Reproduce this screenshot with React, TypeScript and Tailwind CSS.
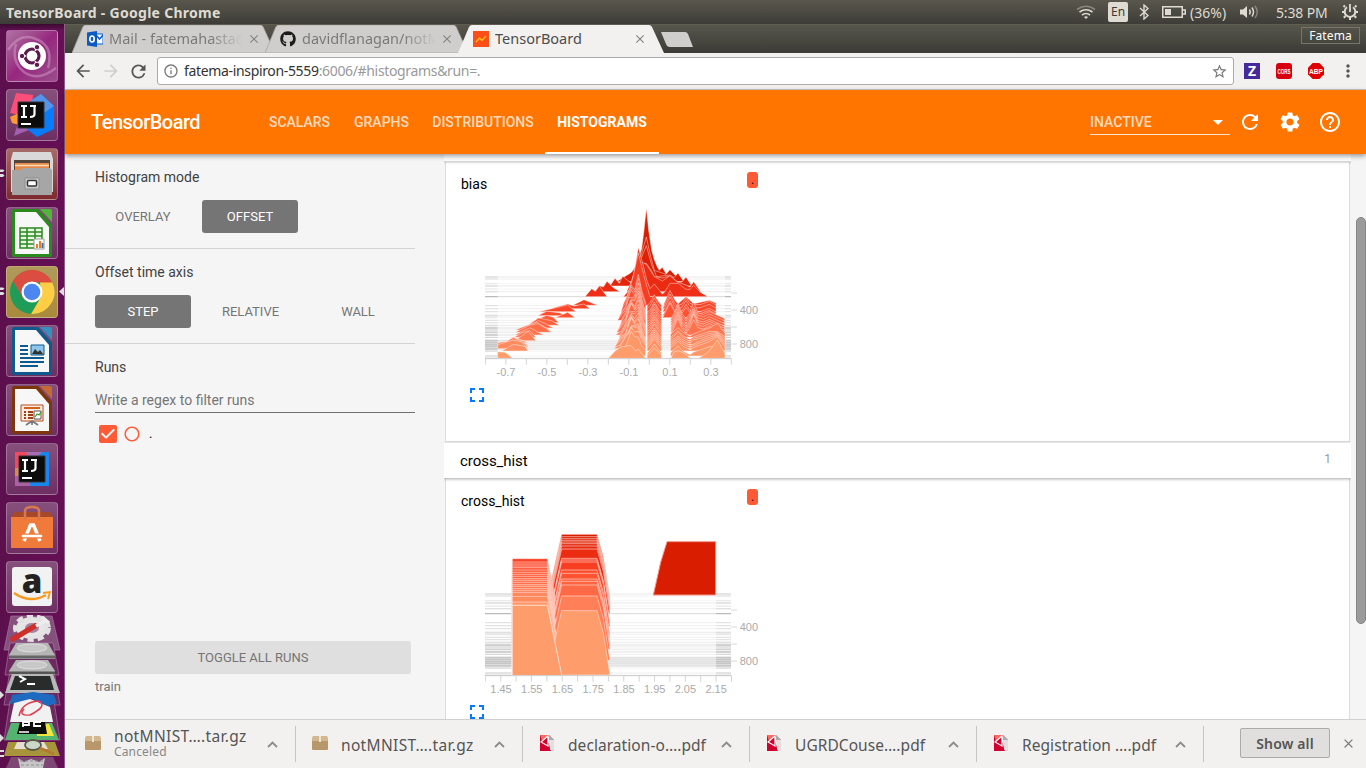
import React from "react";
import {
  MdArrowBack,
  MdArrowForward,
  MdRefresh,
  MdSettings,
  MdHelpOutline,
  MdFullscreen,
  MdStarBorder,
  MdMoreVert,
  MdInfoOutline,
  MdClose,
  MdArrowDropDown,
  MdCheckBox,
  MdRadioButtonUnchecked,
} from "react-icons/md";
import { FaGithub } from "react-icons/fa";

const UI = "font-['Noto_Sans',sans-serif]";

/* ---------- chart data ---------- */

type Pt = [number, number];
type Row = { base: number; pts: Pt[] };

const GRID: [number, number][] = [
  [352, 5], [358, 3], [372, 2], [379, 4], [388, 2], [396, 4], [411, 3], [438, 3], [447, 3],
  [456, 3], [468, 5], [474, 2], [482, 3], [489, 3], [497, 4], [505, 7], [511, 3], [518, 5],
  [526, 6], [533, 3], [543, 5], [549, 5], [555, 6], [561, 4], [567, 6], [574, 3], [589, 3], [596, 3],
];

const EARLY: Row[] = [
  { base: 352, pts: [[470, 0], [488, 18], [500, 40], [515, 85], [522, 140], [529, 207], [536, 140], [545, 80], [553, 52], [562, 30], [568, 20], [577, 29], [594, 0]] },
  { base: 360, pts: [[465, 0], [488, 20], [505, 45], [515, 80], [529, 128], [542, 70], [553, 28], [577, 20], [588, 16], [600, 30], [618, 10], [630, 0]] },
  { base: 366, pts: [[440, 0], [458, 12], [482, 26], [505, 50], [529, 108], [545, 50], [560, 15], [600, 20], [612, 12], [624, 26], [642, 0]] },
  { base: 379, pts: [[420, 0], [435, 23], [448, 8], [458, 29], [482, 10], [495, 30], [505, 50], [517, 66], [529, 68], [545, 45], [553, 28], [577, 24], [600, 30], [624, 12], [636, 12], [648, 27], [665, 0]] },
  { base: 396, pts: [[376, 0], [388, 18], [400, 14], [411, 31], [430, 12], [450, 0], [470, 0], [482, 25], [494, 60], [505, 95], [529, 82], [553, 45], [577, 32], [600, 48], [620, 30], [648, 20], [660, 14], [671, 30], [692, 0]] },
  { base: 411, pts: [[345, 0], [365, 24], [376, 16], [388, 32], [411, 0], [460, 0], [482, 25], [494, 80], [505, 148], [520, 92], [530, 50], [540, 24], [553, 38], [577, 8], [584, 14], [600, 40], [624, 40], [648, 22], [660, 22], [671, 34], [690, 14], [714, 0]] },
  { base: 437, pts: [[308, 0], [342, 17], [383, 0], [460, 0], [475, 35], [490, 90], [505, 157], [524, 80], [540, 26], [553, 28], [575, 0], [580, 0], [600, 45], [615, 15], [624, 5], [648, 26], [671, 5], [718, 15], [738, 7], [738, 0]] },
];

const WING: Record<number, Pt[]> = {
  447: [[240, 0], [293, 14], [312, 8], [342, 14], [360, 0]],
  456: [[205, 0], [268, 14], [293, 20], [318, 0]],
  468: [[203, 0], [230, 13], [268, 9], [290, 0]],
  474: [[255, 0], [293, 16], [315, 0]],
  489: [[180, 0], [230, 22], [250, 16], [266, 0]],
  497: [[175, 0], [205, 22], [245, 14], [268, 0]],
  505: [[165, 0], [205, 22], [225, 14], [250, 0]],
  511: [[135, 0], [180, 17], [200, 23], [240, 0]],
  518: [[135, 0], [160, 12], [180, 22], [205, 26], [245, 0]],
  526: [[133, 0], [180, 22], [205, 8], [222, 0]],
  533: [[132, 0], [156, 14], [180, 20], [198, 0]],
  543: [[130, 0], [155, 14], [175, 28], [198, 0]],
  549: [[108, 0], [130, 17], [160, 6], [175, 0]],
  555: [[84, 0], [108, 8], [130, 22], [155, 12], [172, 0]],
  561: [[83, 0], [83, 12], [110, 16], [130, 28], [160, 12], [176, 0]],
  567: [[83, 0], [83, 12], [130, 26], [155, 20], [172, 0]],
  574: [[95, 0], [130, 20], [165, 14], [174, 0]],
  589: [[83, 0], [83, 12], [110, 8], [122, 0]],
  596: [[83, 0], [83, 20], [105, 18], [128, 0]],
};

function lateRow(base: number, i: number): Row {
  const t = (base - 447) / 149;
  const w = (n: number) => ((i * 37 + n * 53) % 17) / 17;
  const wing = WING[base] ?? [];
  const last = base === 596;
  const center: Pt[] = last
    ? [[415, 0], [435, 22], [452, 34], [482, 39], [497, 22], [505, 27], [527, 0]]
    : [
        [458 - 18 * t - 14 * w(1), 0], [460 - 12 * t, 12 + 8 * w(2)], [467, 28 + 20 * w(7) * t], [476, 46 + 16 * w(3)],
        [484, 60 + 22 * w(4)], [494, 56 + 10 * w(9)], [505, 98 - 50 * t + 8 * w(5)], [516, 52 - 24 * t], [527, 8 + 12 * w(6)], [527, 0],
      ];
  const mid: Pt[] = [[531, 0], [532, 10], [541, 19], [553, last ? 30 : 42 - 6 * t], [566, 19], [574, 10], [575, 0]];
  let right: Pt[];
  if (last) {
    right = [[602, 0], [612, 19], [624, 23], [640, 17], [662, 0], [685, 0], [705, 12], [718, 22], [742, 56], [765, 14], [765, 0]];
  } else if (base < 480) {
    right = [[578, 0], [600, 44], [613, 18], [622, 8], [636, 14], [648, 30 + 5 * w(4)], [660, 16], [671, 12], [690, 12], [718, 22], [738, 11], [738, 0]];
  } else if (base < 530) {
    right = [[601, 0], [612, 22], [624, 50], [636, 20], [648, 5], [658, 20], [671, 46 + 10 * w(2)], [684, 22], [700, 18], [718, 26], [740, 16], [763, 6], [765, 0]];
  } else {
    right = [[601, 0], [602, 10], [624, 26 + 6 * w(5)], [640, 14], [660, 4], [671, 8 + 8 * w(3)], [695, 20], [718, 28], [742, 26 + 18 * w(8)], [765, 12], [765, 0]];
  }
  return { base, pts: [...wing, ...center, ...mid, ...right] };
}

const BIAS: Row[] = [...EARLY, ...GRID.map((g) => g[0]).filter((b) => b >= 447).map(lateRow)];

function shade(t: number): string {
  const stops = [[217, 29, 0], [240, 48, 24], [255, 80, 48], [255, 120, 82], [255, 156, 107]];
  const p = Math.max(0, Math.min(0.9999, t)) * 4;
  const k = Math.floor(p);
  const f = p - k;
  const c = stops[k].map((v, n) => Math.round(v + (stops[k + 1][n] - v) * f));
  return "rgb(" + c.join(",") + ")";
}

function Axis({ ticks, labels }: { ticks: number[]; labels: [number, string][] }) {
  return (
    <g>
      <path d="M46 597H784" stroke="#cfcfcf" strokeWidth="3" />
      {ticks.map((x) => (
        <path key={x} d={`M${x} 597V615`} stroke="#d4d4d4" strokeWidth="3" />
      ))}
      {[400, 451, 502, 553].map((y) => (
        <path key={y} d={`M784 ${y}H801`} stroke="#d8d8d8" strokeWidth="3" />
      ))}
      <g fill="#aaaaaa" fontSize="33" fontFamily="Liberation Sans, Arial, sans-serif">
        {labels.map(([x, s]) => (
          <text key={s} x={x} y="648" textAnchor="middle">{s}</text>
        ))}
        <text x="809" y="463">400</text>
        <text x="809" y="564">800</text>
      </g>
    </g>
  );
}

function Grid({ from, to }: { from: number; to: number }) {
  return (
    <g>
      {GRID.map(([y, w]) => (
        <g key={y} strokeWidth={w}>
          <path d={`M45 ${y}H783`} stroke={y === 411 || y === 596 ? "#d8d8d8" : "#f0f0f0"} />
          <path d={`M45 ${y}H${from}M${to} ${y}H783`} stroke={y === 411 || y === 596 ? "#b4b4b4" : y > 500 ? "#d2d2d2" : "#e0e0e0"} />
        </g>
      ))}
      <path d="M45 555H783" stroke="#000" strokeOpacity="0.05" strokeWidth="30" />
    </g>
  );
}

function BiasChart() {
  const ticks = Array.from({ length: 13 }, (_, i) => 46 + i * 61.5);
  return (
    <svg className="block h-[190px] w-[290px]" viewBox="45 100 870 570">
      <Grid from={83} to={765} />
      {BIAS.map(({ base, pts }, i) => (
        <path
          key={i}
          d={"M" + pts.map(([x, h]) => `${x.toFixed(1)} ${(base - h).toFixed(1)}`).join("L") + "Z"}
          fill={shade((base - 352) / 244)}
          stroke="#ffffff"
          strokeOpacity="0.5"
          strokeWidth="2.6"
        />
      ))}
      <Axis ticks={ticks} labels={[[108, "-0.7"], [231, "-0.5"], [354, "-0.3"], [477, "-0.1"], [600, "0.1"], [723, "0.3"]]} />
    </svg>
  );
}

const RIGHT_TOPS = [173, 180, 186, 191, 196, 201, 208, 217, 245, 250, 256, 280, 290, 307, 314, 325, 358, 402];
const LEFT_TOPS = [246, 256, 262, 268, 273, 280, 287, 293, 299, 306, 311, 317, 324, 329, 336, 342, 348, 359, 376, 386];

function CrossChart() {
  const ticks = Array.from({ length: 17 }, (_, i) => 46 + i * 46.15);
  const rows = [
    ...RIGHT_TOPS.map((y) => ({ side: "r", y, base: y + 193 })),
    ...LEFT_TOPS.map((y) => ({ side: "l", y, base: y + 209 })),
  ].sort((a, b) => a.base - b.base);
  const labels: [number, string][] = ["1.45", "1.55", "1.65", "1.75", "1.85", "1.95", "2.05", "2.15"].map((s, i) => [93 + i * 92.2, s]);
  return (
    <svg className="block h-[190px] w-[290px]" viewBox="45 100 870 570">
      <Grid from={123} to={738} />
      <path d="M550 355L572 257L591 195H737V355Z" fill="#d91d00" stroke="#f0968a" strokeWidth="3" />
      {rows.map(({ side, y, base }) => {
        const f = Math.max(0, (base - 366) / 229);
        const d =
          side === "l"
            ? `M127 ${base}V${y}H232L254 ${y + 108}L275 ${base}Z`
            : `M232 ${base}L254 ${y + 92}L275 ${y}H381L400 ${y + 67}L420 ${base}Z`;
        return <path key={side + y} d={d} fill={shade(f)} stroke="#ffe4dc" strokeOpacity="0.6" strokeWidth="3" />;
      })}
      <path d="M127 595V386H232L254 494L275 595Z" fill="#ff9c6b" />
      <path d="M127 595V386H232L275 595" fill="none" stroke="#ffd9c6" strokeWidth="3" />
      <Axis ticks={ticks} labels={labels} />
    </svg>
  );
}

/* ---------- launcher ---------- */

function Tile({ tone, children, run }: { tone: string; children: React.ReactNode; run?: boolean }) {
  return (
    <div className="relative h-[52px] w-[52px] shrink-0">
      <div className={"h-full w-full rounded-[4px] border border-white/25 " + tone}>
        <svg className="block h-[50px] w-[50px]" viewBox="1 1 50 50">{children}</svg>
      </div>
      {run && (
        <svg className="absolute top-[20px] -left-[6px] h-[10px] w-[5px]" viewBox="0 0 5 10">
          <path d="M0 1.5H3L4.500 2.500L3 4H0ZM0 6H3L4.500 7.500L3 9H0Z" fill="#dedede" />
        </svg>
      )}
    </div>
  );
}

function Intellij() {
  return (
    <g>
      <path d="M13 13H39V39H13Z" fill="#0c0c0c" stroke="#333" />
      <path d="M16 17H22M19 17V28M16 28H22M25 17H31M29.500 17V25Q29.500 28 25 28" stroke="#fff" strokeWidth="2.200" fill="none" />
      <path d="M16 35H26" stroke="#fff" strokeWidth="2" />
    </g>
  );
}

function OfficeDoc({ color, light, children }: { color: string; light: string; children: React.ReactNode }) {
  return (
    <g>
      <path d="M8 2H32L46 18V48Q46 50 44 50H8Q6 50 6 48V4Q6 2 8 2Z" fill={color} />
      <path d="M34 2H44Q46 2 46 4V15Z" fill={light} />
      <path d="M9 5H30L43 20V47H9Z" fill="#f7f7f7" />
      {children}
    </g>
  );
}

function Launcher() {
  const violet = "bg-linear-to-b from-[#87507c] to-[#6e2f63]";
  return (
    <aside className="flex h-full w-[65px] shrink-0 flex-col border-r border-[#8a5f82] bg-linear-to-r from-[#5c0f4d] to-[#660f56]">
      <div className="h-[6px] shrink-0 bg-linear-to-b from-[#3a0a31] to-transparent" />
      <div className="flex flex-col gap-[7px] pl-[6px]">
        <Tile tone="bg-linear-to-br from-[#ad71a1] via-[#97267f] to-[#9a4d8c]">
          <path d="M2 20Q14 2 30 9Q48 16 42 38M50 38Q32 52 18 42Q5 32 10 14" stroke="#d8a9ce" strokeOpacity=".45" fill="none" strokeWidth="2.500" />
          <circle cx="26" cy="26" r="14" fill="#fff" />
          <circle cx="26" cy="26" r="7" fill="none" stroke="#5c1a50" strokeWidth="3.200" />
          <path d="M20 26H13M29 31L33 38M29 21L33 14" stroke="#fff" strokeWidth="1.500" />
          <g fill="#5c1a50" stroke="#fff" strokeWidth="1">
            <circle cx="16" cy="26" r="2.700" /><circle cx="31" cy="17.200" r="2.700" /><circle cx="31" cy="34.800" r="2.700" />
          </g>
        </Tile>
        <Tile tone={violet}>
          <path d="M10 4L27 6L24 28L4 24Z" fill="#fb4f7a" />
          <path d="M4 28L13 24V36L6 34Z" fill="#fb9d2e" />
          <path d="M13 30L8 47L30 38Z" fill="#a35fb0" />
          <path d="M35 5L48 17V40L31 48L21 40V15Z" fill="#087cfa" />
          <path d="M35 5L48 17L38 24L24 12Z" fill="#5494ea" />
          <g transform="translate(-1 0)"><Intellij /></g>
        </Tile>
        <Tile tone="bg-linear-to-b from-[#a66b68] to-[#7d2a31]" run>
          <path d="M7 4H45L47 11V44H5V11Z" fill="#d9d9d9" />
          <path d="M8 12H44V23H8Z" fill="#54453d" />
          <path d="M9 15H43V23H9Z" fill="#e58a4a" />
          <path d="M9 17.500H43" stroke="#fbd9b4" strokeWidth="1.500" />
          <path d="M6 22H15L17 20H44L46 22V47H6Z" fill="#a6a6a6" />
          <path d="M19 30H33V41H19Z" fill="#c9c9c9" stroke="#8f8f8f" />
          <rect x="21.500" y="32.500" width="9" height="5.500" rx="1" fill="#fff" stroke="#333" strokeWidth="1.500" />
        </Tile>
        <Tile tone={violet}>
          <OfficeDoc color="#2b8a1e" light="#52b53c">
            <path d="M14 21H36V41H14Z" fill="#e9f5e6" />
            <path d="M14 21H36V41H14ZM14 25H36M14 29H36M14 33H36M14 37H36M21 21V41M29 21V41" stroke="#2b8a1e" strokeWidth="1.500" fill="none" />
            <path d="M28 32H38V42H28Z" fill="#fff" stroke="#999" />
            <path d="M30 41V37H32V41ZM33 41V34H35V41Z" fill="#f07a17" /><path d="M35.500 41V36H37.500V41Z" fill="#2b77bb" />
          </OfficeDoc>
        </Tile>
        <div className="relative">
          <Tile tone="bg-linear-to-b from-[#b09a5a] to-[#a98a3c]" run>
            <circle cx="26" cy="26" r="22" fill="#1f9d58" />
            <path d="M7 15A22 22 0 0 1 46 16H26L17 32Z" fill="#dc4d41" />
            <path d="M46 16A22 22 0 0 1 25 48L35 31L34 16Z" fill="#ffce44" />
            <path d="M26 16H46" stroke="#dc4d41" />
            <circle cx="26" cy="26" r="10.500" fill="#fff" /><circle cx="26" cy="26" r="8.300" fill="#4c86f0" />
          </Tile>
          <svg className="absolute top-[21px] left-[53px] h-[9px] w-[5px]" viewBox="0 0 5 9"><path d="M5 0V9L0 4.500Z" fill="#dedede" /></svg>
        </div>
        <Tile tone={violet}>
          <OfficeDoc color="#0e5a8c" light="#3590c0">
            <path d="M14 21H22M14 25H22M14 29H22M14 33H38M14 37H38M14 41H32" stroke="#0e5a8c" strokeWidth="2" />
            <path d="M25 20H38V30H25Z" fill="#8cc6ea" stroke="#0e5a8c" /><path d="M26 29L29 24L32 27L34 25L37.500 29.500Z" fill="#333" />
          </OfficeDoc>
        </Tile>
        <Tile tone={violet}>
          <OfficeDoc color="#7d360c" light="#c36b34">
            <path d="M15 21H37V37H15Z" fill="#fdeee4" stroke="#b7491a" />
            <path d="M18 24H34" stroke="#d7601f" strokeWidth="2" />
            <path d="M18 28H20M18 31H20M18 34H20M22 28H27M22 31H27M22 34H27" stroke="#a63c12" strokeWidth="1.800" />
            <path d="M28 27H35V35H28Z" fill="#fff" stroke="#555" /><path d="M29 33L31 30L33 31L35 28" stroke="#3c9b30" fill="none" strokeWidth="1.300" />
            <path d="M26 37L20 41M26 37L32 41M26 37V41" stroke="#777" strokeWidth="1.600" />
          </OfficeDoc>
        </Tile>
        <Tile tone={violet}>
          <path d="M9 9H26V43H9Z" fill="#f0485c" /><path d="M9 25H16V43H9Z" fill="#d58b52" /><path d="M9 33H26V43H9Z" fill="#a862a2" />
          <path d="M26 9H43V43H24Z" fill="#1786ee" /><path d="M20 9H36L26 20Z" fill="#a66fb2" />
          <Intellij />
        </Tile>
        <Tile tone={violet}>
          <path d="M5 15H47V46H5Z" fill="#f07a3a" /><path d="M5 15L8 10H44L47 15Z" fill="#a6492a" />
          <path d="M19 18V9Q19 5 26 5Q33 5 33 9V18" fill="none" stroke="#d87850" strokeWidth="2.500" />
          <path d="M18 39L24.500 23H27.500L34 39" fill="none" stroke="#fff" strokeWidth="3.500" />
          <path d="M17 34H35" stroke="#f07a3a" strokeWidth="5" /><path d="M17 34H35" stroke="#fff" strokeWidth="2.600" strokeLinecap="round" />
        </Tile>
        <Tile tone={violet}>
          <rect x="6" y="6" width="40" height="39" rx="3" fill="#f2f2f2" />
          <text x="26" y="32" textAnchor="middle" fontFamily="Open Sans, sans-serif" fontWeight="800" fontSize="33" fill="#222">a</text>
          <path d="M8 32Q24 43 40 34" stroke="#f79b1e" strokeWidth="2.500" fill="none" /><path d="M37 32L44 31L42 38" stroke="#f79b1e" strokeWidth="1.800" fill="none" />
        </Tile>
      </div>
      <svg className="mt-[2px] block h-[153px] w-[64px] shrink-0" viewBox="0 0 64 153">
        <g stroke="#b27eaa" strokeOpacity=".6">
          <path d="M11 1H52L60 35H4Z" fill="#85507c" />
          <path d="M10 28H53L59 60H5Z" fill="#6c2a61" />
          <path d="M10 56H54L60 90H4Z" fill="#6c2a61" />
          <path d="M10 86H54L60 125H4Z" fill="#6c2a61" />
        </g>
        <ellipse cx="32" cy="13" rx="16" ry="11" fill="#e5e5e5" stroke="#e2e2e2" strokeWidth="6" strokeDasharray="6 3.800" />
        <ellipse cx="32" cy="13" rx="7" ry="5" fill="#a683a1" />
        <path d="M13 24L35 11" stroke="#cf2f2a" strokeWidth="5.500" strokeLinecap="round" />
        <path d="M36 11L45 6M42 2L49 8" stroke="#ededed" strokeWidth="3.500" />
        <path d="M16 28H48L55 40V44H9V40Z" fill="#b5b5b5" /><ellipse cx="32" cy="33" rx="15" ry="4" fill="#c8c8c8" stroke="#e0e0e0" /><path d="M9 42H55" stroke="#666" strokeWidth="3" />
        <path d="M16 45H48L55 56V60H9V56Z" fill="#b5b5b5" /><ellipse cx="32" cy="50" rx="15" ry="4" fill="#c8c8c8" stroke="#e0e0e0" /><path d="M9 58H55" stroke="#555" strokeWidth="3" />
        <path d="M12 59H53L60 78H5Z" fill="#b8b8b8" /><path d="M15 61H50L54 75H10Z" fill="#282c2b" />
        <path d="M19 61L25 64L20 67M27 69H35" stroke="#fff" strokeWidth="2" fill="none" />
        <path d="M12 80L33 77L54 80L57 88L48 91L32 84L10 89Z" fill="#1d6bc0" />
        <path d="M14 88L30 84L50 92L53 107H10Z" fill="#f1f1f1" />
        <path d="M19 101Q22 87 39 86Q48 91 30 100Q18 101 24 94" stroke="#dc3e50" strokeWidth="1.500" fill="none" />
        <path d="M11 108H52L59 125H5Z" fill="#53b36f" /><path d="M37 109H49L54 121H37Z" fill="#f1e63c" />
        <path d="M20 107H45L47 119H17Z" fill="#0d0d0d" />
        <path d="M23 112V107H29V110H23M41 107H34V111H41" stroke="#fff" strokeWidth="1.800" fill="none" />
        <path d="M19 117H29" stroke="#fff" strokeWidth="1.500" />
        <path d="M8 127H55L60 141H4Z" fill="#a8943a" />
        <path d="M17 127H44L48 134H14Z" fill="#e5e1d2" /><ellipse cx="33" cy="130" rx="8" ry="5" fill="#cbd7c7" stroke="#595b46" strokeWidth="1.800" /><path d="M40 133L54 139" stroke="#b47830" strokeWidth="2.500" />
        <path d="M11 142H53L58 153H6Z" fill="#7c4772" />
        <path d="M18 143L24 147L31 144L39 147L45 143L43 153H20Z" fill="#c6c6c6" /><path d="M20 146H44M21 150H43" stroke="#8e8e8e" strokeDasharray="3 2" />
        <path d="M0 76L4 80L0 84ZM0 119L4 123L0 127Z" fill="#dedede" /><path d="M0 136H4M0 141H4" stroke="#dedede" strokeWidth="2" />
      </svg>
    </aside>
  );
}

/* ---------- desktop panel and browser chrome ---------- */

function SystemBar() {
  return (
    <header className="flex h-6 shrink-0 items-center bg-linear-to-b from-[#5a584d] to-[#3d3c37] pr-[8px] pl-[6px] text-[#dfdbd2]">
      <span className="text-[14px] font-bold tracking-[0.280px]">TensorBoard - Google Chrome</span>
      <div className="ml-auto flex h-full items-center text-[14px]">
        <svg className="mr-[12px] h-[16px] w-[20px]" viewBox="0 0 20 16" fill="none" stroke="#dfdbd2" strokeWidth="1.600">
          <path d="M1 5.500Q10 -1 19 5.500" strokeOpacity=".4" /><path d="M3.500 8Q10 3.500 16.500 8M6 11Q10 8 14 11" /><path d="M8 13L10 15L12 13Q10 11.500 8 13Z" fill="#dfdbd2" stroke="none" />
        </svg>
        <span className="mr-[11px] flex h-5 w-5 items-center justify-center rounded-[2px] bg-[#dfdbd2] text-[12px] text-[#3c3b37]">En</span>
        <svg className="mr-[13px] h-4 w-[10px]" viewBox="0 0 10 16"><path d="M1 4L9 11.500L5 15V1L9 4.500L1 12" stroke="#dfdbd2" strokeWidth="1.400" fill="none" /></svg>
        <svg className="mr-[4px] h-3 w-6" viewBox="0 0 24 12"><path d="M.75 .75H20.250V11.250H.75ZM21 4H23.250V8H21" fill="none" stroke="#dfdbd2" strokeWidth="1.500" /><path d="M3 3H9V9H3Z" fill="#dfdbd2" /></svg>
        <span className="mr-[12px] w-[38px] tracking-[0.050px]">(36%)</span>
        <svg className="mr-[17px] h-[14px] w-[19px]" viewBox="0 0 19 14"><path d="M0 4.500H3L7 1V13L3 9.500H0Z" fill="#dfdbd2" /><path d="M9.500 4.500Q11 7 9.500 9.500M12 2.500Q15 7 12 11.500" stroke="#dfdbd2" strokeWidth="1.500" fill="none" /><path d="M15 1Q19.500 7 15 13" stroke="#dfdbd2" strokeOpacity=".4" strokeWidth="1.500" fill="none" /></svg>
        <span className="mr-[13px] w-[53px] whitespace-nowrap tracking-[-0.150px]">5:38 PM</span>
        <svg className="h-4 w-4" viewBox="0 0 16 16" fill="none" stroke="#dfdbd2"><path d="M5 3.300A5.300 5.300 0 1 0 11 3.300" strokeWidth="2" /><path d="M8 0V8" strokeWidth="1.800" /><path d="M3 3L1.500 1.500M2.500 8H0M3.500 12L1.800 13.800M8 13V16M12.500 12L14.200 13.800M13.500 8H16M13 3L14.500 1.500" strokeWidth="2" /></svg>
      </div>
    </header>
  );
}

function Tab({ title, icon, active, width }: { title: string; icon: React.ReactNode; active?: boolean; width: string }) {
  return (
    <div className={"relative -mr-[10px] flex h-[28px] items-center pl-[15px] " + width + (active ? " z-10" : "")}>
      <svg className="absolute inset-0 h-full w-full" viewBox="0 0 206 28" preserveAspectRatio="none">
        <path d="M0 28L11 2Q12 0 14 0H191Q193 0 194 2L206 28Z" fill={active ? "#f2f1f0" : "#cfcecd"} stroke={active ? "none" : "#a9a8a6"} strokeWidth=".8" />
      </svg>
      <div className="relative -mt-[1px] flex h-4 w-4 shrink-0 items-center justify-center">{icon}</div>
      <span className={"relative -mt-[2px] ml-[6px] w-[134px] overflow-hidden text-[14.500px] leading-5 whitespace-nowrap " + (active ? "text-[#4c4c4c]" : "bg-linear-to-r from-[#777] from-75% to-transparent bg-clip-text text-transparent")}>
        {title}
      </span>
      <MdClose className="relative -mt-[1px] ml-[4px] h-[14px] w-[14px] shrink-0 text-[#858585]" />
    </div>
  );
}

function BrowserChrome() {
  return (
    <div className="shrink-0">
      <div className="flex h-[29px] items-end border-t border-[#5f5d50] bg-linear-to-b from-[#57564b] to-[#3c3b37] pl-[7px]">
        <Tab width="w-[203px]" title="Mail - fatemahasta@" icon={
          <svg className="h-4 w-4" viewBox="0 0 16 16"><path d="M9 3H16V13H9Z" fill="#fff" stroke="#0a5bc4" /><path d="M9 4L12.500 8L16 4" stroke="#0a5bc4" strokeWidth="1.500" fill="none" /><path d="M0 1.500L10 0V16L0 14.500Z" fill="#0a5bc4" /><ellipse cx="5" cy="8" rx="2.200" ry="3" fill="none" stroke="#fff" strokeWidth="1.700" /></svg>} />
        <Tab width="w-[203px]" title="davidflanagan/notMN" icon={<FaGithub className="h-4 w-4 text-[#1b1b1b]" />} />
        <Tab active width="w-[206px]" title="TensorBoard" icon={
          <svg className="h-4 w-4" viewBox="0 0 16 16"><path d="M0 0H16V16H0Z" fill="#fc4f18" /><path d="M3 11L6.500 7L9 9.500L13 5" stroke="#ffbe18" strokeWidth="1.500" fill="none" /></svg>} />
        <svg className="mb-[5px] ml-[6px] h-[16px] w-[34px]" viewBox="0 0 34 16"><path d="M1 0H25Q27 0 28 2L33 15H10Q7 15 6 12Z" fill="#cfcecd" /></svg>
        <div className="mr-[6px] mb-[9px] ml-auto flex h-[17px] w-[59px] items-center justify-center border border-[#777469] text-[12px] tracking-[0.100px] text-white">Fatema</div>
      </div>
      <div className="flex h-[37px] items-center border-b border-[#c9c8c6] bg-[#f2f1f0] pl-[8px] text-[#555]">
        <MdArrowBack className="h-[20px] w-[20px]" />
        <MdArrowForward className="ml-[8px] h-[20px] w-[20px] text-[#cfcfcf]" />
        <MdRefresh className="ml-[7px] h-[21px] w-[21px]" />
        <div className="ml-[8px] flex h-[28px] w-[1077px] items-center rounded-[3px] border border-[#acaba9] bg-white pr-[5px] pl-[5px]">
          <MdInfoOutline className="h-[16px] w-[16px] text-[#777]" />
          <span className="-mt-[2px] ml-[5px] text-[14px] tracking-[-0.340px] text-[#333]">fatema-inspiron-5559<span className="text-[#999]">:6006/#histograms&amp;run=.</span></span>
          <MdStarBorder className="ml-auto h-[17px] w-[17px] text-[#777]" />
        </div>
        <div className="ml-[10px] flex h-4 w-4 items-center justify-center bg-[#46299b] text-[14px] leading-none font-bold text-white">Z</div>
        <div className="ml-[16px] flex h-4 w-4 items-center justify-center rounded-[3px] bg-[#d8000f]">
          <svg className="h-4 w-4" viewBox="0 0 16 16"><text x="1.500" y="10.800" textLength="13" lengthAdjust="spacingAndGlyphs" fontFamily="Liberation Sans, sans-serif" fontWeight="700" fontSize="7.500" fill="#fff">CORS</text></svg>
        </div>
        <svg className="ml-[16px] h-4 w-4" viewBox="0 0 16 16">
          <path d="M4.700 0H11.300L16 4.700V11.300L11.300 16H4.700L0 11.300V4.700Z" fill="#e10000" />
          <text x="1" y="10.800" textLength="14" lengthAdjust="spacingAndGlyphs" fontFamily="Liberation Sans, sans-serif" fontWeight="700" fontSize="7.800" fill="#fff">ABP</text>
        </svg>
        <MdMoreVert className="ml-[14px] h-[20px] w-[20px]" />
      </div>
    </div>
  );
}

/* ---------- TensorBoard ---------- */

function Toolbar() {
  return (
    <header className="relative z-20 flex h-16 shrink-0 items-center bg-[#ff7500] pr-[24px] pl-[26px] text-white shadow-[0_2px_5px_rgba(0,0,0,0.4)]">
      <h1 className="w-[166px] text-[20px] font-medium tracking-[-0.520px]">TensorBoard</h1>
      <nav className="flex h-full text-[14px] font-medium text-white/75">
        <span className="flex w-[85px] items-center justify-center">SCALARS</span>
        <span className="flex w-[79px] items-center justify-center">GRAPHS</span>
        <span className="flex w-[124px] items-center justify-center">DISTRIBUTIONS</span>
        <span className="flex w-[114px] items-center justify-center border-b-2 border-white pt-[2px] font-bold text-white">HISTOGRAMS</span>
      </nav>
      <div className="ml-auto flex h-[26px] w-[140px] items-center border-b border-white/80 pt-[1px]">
        <span className="text-[14px] font-medium text-white/75">INACTIVE</span>
        <MdArrowDropDown className="ml-auto h-6 w-6" />
      </div>
      <MdRefresh className="ml-[8px] h-6 w-6" />
      <MdSettings className="ml-[16px] h-6 w-6" />
      <MdHelpOutline className="ml-[16px] h-6 w-6" />
    </header>
  );
}

function Sidebar() {
  const on = "flex h-[33px] w-24 items-center justify-center rounded-[3px] bg-[#757575] text-white";
  const off = "flex h-[33px] items-center justify-center text-[#757575]";
  return (
    <aside className="flex w-[379px] shrink-0 flex-col bg-[#f5f5f5] text-[#424242]">
      <section className="h-[95px] w-[350px] border-b border-[#d3d3d3] pt-[13px] pl-[30px]">
        <h2 className="text-[14px] leading-5">Histogram mode</h2>
        <div className="mt-[13px] flex gap-[11px] text-[13px]">
          <span className={off + " w-24"}>OVERLAY</span>
          <span className={on}>OFFSET</span>
        </div>
      </section>
      <section className="h-[95px] w-[350px] border-b border-[#d3d3d3] pt-[13px] pl-[30px]">
        <h2 className="text-[14px] leading-5">Offset time axis</h2>
        <div className="mt-[13px] flex gap-[11px] text-[13px]">
          <span className={on}>STEP</span>
          <span className={off + " w-[97px]"}>RELATIVE</span>
          <span className={off + " w-24"}>WALL</span>
        </div>
      </section>
      <section className="w-[350px] pt-[13px] pl-[30px]">
        <h2 className="text-[14px] leading-5">Runs</h2>
        <div className="mt-[10px] flex h-[26px] items-center border-b border-[#707070] pt-[2px] text-[14px] text-[#757575]">Write a regex to filter runs</div>
        <div className="mt-[9px] flex h-6 items-center pl-[1px]">
          <MdCheckBox className="h-6 w-6 text-[#ff5a36]" />
          <MdRadioButtonUnchecked className="ml-[3px] h-[18px] w-[18px] text-[#ff5a36]" />
          <span className="ml-[8px] text-[13px] text-black">.</span>
        </div>
      </section>
      <div className="mt-auto mb-[22px] pl-[30px] text-[13px] text-[#757575]">
        <div className="flex h-[33px] w-[316px] items-center justify-center rounded-[3px] bg-[#dfdfdf]">TOGGLE ALL RUNS</div>
        <div className="mt-[3px] leading-5">train</div>
      </div>
    </aside>
  );
}

function HistogramPanel({ name, chart }: { name: string; chart: React.ReactNode }) {
  return (
    <div className="w-[313px] pl-[15px]">
      <div className="flex h-[36px] items-start justify-between pt-[10px]">
        <span className="pt-[3px] text-[14px] leading-[18px] text-black">{name}</span>
        <span className="mr-[1px] flex h-4 w-[11px] items-center justify-center rounded-[3px] bg-[#ff5a36] text-[12px] leading-none text-black">.</span>
      </div>
      <div className="-mt-[5px] ml-[24px]">{chart}</div>
      <MdFullscreen className="ml-[4px] h-6 w-6 text-[#007bff]" />
    </div>
  );
}

function Board() {
  return (
    <main className="flex min-w-0 flex-1 bg-[#f5f5f5]">
      <div className="flex w-[907px] shrink-0 flex-col overflow-hidden">
        <div className="z-10 h-[8px] shrink-0 border-b border-[#d4d4d4] bg-white shadow-[0_1px_2px_rgba(0,0,0,0.15)]" />
        <div className="mx-[1px] h-[280px] shrink-0 border border-t-0 border-[#dcdcdc] bg-white">
          <HistogramPanel name="bias" chart={<BiasChart />} />
        </div>
        <div className="z-10 mt-[1px] flex h-[35px] shrink-0 items-center justify-between bg-white pr-[20px] pl-[16px] shadow-[0_1px_3px_rgba(0,0,0,0.35)]">
          <span className="pt-[1px] text-[15px] tracking-[-0.050px] text-black">cross_hist</span>
          <span className="-mt-[4px] text-[12px] text-[#999]">1</span>
        </div>
        <div className="mx-[1px] h-[250px] shrink-0 border border-y-0 border-[#dcdcdc] bg-white pt-[1px]">
          <HistogramPanel name="cross_hist" chart={<CrossChart />} />
        </div>
      </div>
      <div className="ml-auto w-[10px] pt-[63px]">
        <div className="h-[407px] w-full rounded-[5px] border border-[#858585] bg-[#9b9b9b]" />
      </div>
    </main>
  );
}

/* ---------- download shelf ---------- */

function Download({ name, note, pdf }: { name: string; note?: string; pdf?: boolean }) {
  return (
    <div className="flex h-full w-[227px] items-center pl-[16px]">
      {pdf ? (
        <svg className="mb-[2px] ml-[1px] h-[16px] w-[14px] shrink-0" viewBox="0 0 14 16"><path d="M0 0H9L14 5V16H0Z" fill="#d2002f" /><path d="M0 0H9L2 6Z" fill="#ff6a60" /><path d="M8 1V11L1 7L8 1L11 15" stroke="#fff" strokeWidth="1.200" fill="none" /><path d="M9 0L14 5V16H11L9 6Z" fill="#e6dede" /><path d="M9 0V5H14" fill="#aaa" /></svg>
      ) : (
        <svg className="mb-[2px] h-[16px] w-[16px] shrink-0" viewBox="0 0 16 16"><path d="M1 1H15L16 5V14Q16 15 15 15H1Q0 15 0 14V5Z" fill="#b8976a" /><path d="M1 1H15L16 6H0Z" fill="#d2b891" /><path d="M7 1H9V7H7Z" fill="#efe4cb" /></svg>
      )}
      <div className={"w-[139px] shrink-0 text-[#555] " + (pdf ? "ml-[14px]" : "ml-[13px]")}>
        <div className={"text-[15.500px] leading-[18px] whitespace-nowrap " + (note ? "" : "mt-[1px] ") + (pdf ? "tracking-[0.060px]" : "tracking-[0.330px]")}>{name}</div>
        {note && <div className="mb-[2px] text-[12px] leading-[14px] tracking-[0.150px] text-[#888]">{note}</div>}
      </div>
      <svg className="ml-[14px] h-[7px] w-[11px] shrink-0" viewBox="0 0 11 7"><path d="M1 6L5.500 1.500L10 6" fill="none" stroke="#8c8c8c" strokeWidth="1.800" /></svg>
      <div className="ml-auto h-9 w-px bg-[#c8c7c5]" />
    </div>
  );
}

function Shelf() {
  return (
    <footer className="z-20 flex h-[49px] shrink-0 items-center border-t border-[#cfcfcf] bg-[#f2f1f0] pl-[1px]">
      <div className="flex h-full pl-[3px]">
        <Download name="notMNIST….tar.gz" note="Canceled" />
        <Download name="notMNIST….tar.gz" />
        <Download name="declaration-o….pdf" pdf />
        <Download name="UGRDCouse….pdf" pdf />
        <Download name="Registration ….pdf" pdf />
      </div>
      <div className="mr-[10px] mb-[2px] ml-auto flex items-center gap-[11px]">
        <div className="flex h-[30px] w-[90px] items-center justify-center rounded-[2px] border border-[#acaba9] bg-[#e0dfdd] text-[14px] font-semibold tracking-[0.150px] text-[#555]">Show all</div>
        <MdClose className="h-[15px] w-[15px] text-[#808080]" />
      </div>
    </footer>
  );
}

export default function App() {
  return (
    <div className={"flex h-[768px] w-[1366px] flex-col overflow-hidden " + UI}>
      <SystemBar />
      <div className="flex min-h-0 flex-1">
        <Launcher />
        <div className="flex min-w-0 flex-1 flex-col">
          <BrowserChrome />
          <div className="flex min-h-0 flex-1 flex-col font-['Roboto',sans-serif]">
            <Toolbar />
            <div className="flex min-h-0 flex-1">
              <Sidebar />
              <Board />
            </div>
          </div>
          <Shelf />
        </div>
      </div>
    </div>
  );
}
